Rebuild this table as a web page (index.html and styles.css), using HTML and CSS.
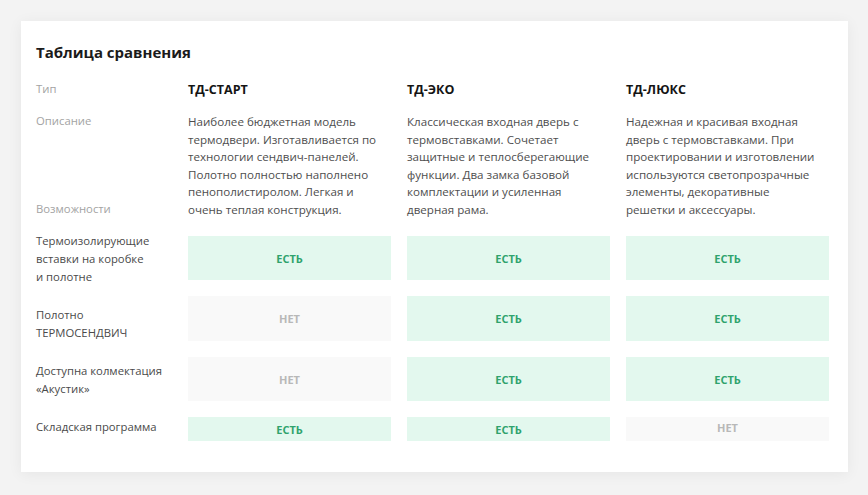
FILE: index.html
```html
<!DOCTYPE html>
<html lang="ru">
<head>
<meta charset="utf-8">
<title>Таблица сравнения</title>
<link rel="stylesheet" href="styles.css">
</head>
<body>
<section class="card">
  <h2 class="title">Таблица сравнения</h2>
  <div class="table">
    <div class="labels">
      <div class="lbl lbl-type">Тип</div>
      <div class="lbl lbl-desc">Описание</div>
      <div class="lbl lbl-cap">Возможности</div>
      <div class="features">
        <div class="feat">Термоизолирующие<br>вставки на коробке<br>и полотне</div>
        <div class="feat">Полотно<br>ТЕРМОСЕНДВИЧ</div>
        <div class="feat">Доступна колмектация<br>«Акустик»</div>
        <div class="feat">Складская программа</div>
      </div>
    </div>
    <div class="col">
      <div class="name">ТД-СТАРТ</div>
      <p class="desc">Наиболее бюджетная модель<br>термодвери. Изготавливается по<br>технологии сендвич-панелей.<br>Полотно полностью наполнено<br>пенополистиролом. Легкая и<br>очень теплая конструкция.</p>
      <div class="boxes">
        <div class="box yes h1">ЕСТЬ</div>
        <div class="box no h2">НЕТ</div>
        <div class="box no h3">НЕТ</div>
        <div class="box yes h4">ЕСТЬ</div>
      </div>
    </div>
    <div class="col">
      <div class="name">ТД-ЭКО</div>
      <p class="desc">Классическая входная дверь с<br>термовставками. Сочетает<br>защитные и теплосберегающие<br>функции. Два замка базовой<br>комплектации и усиленная<br>дверная рама.</p>
      <div class="boxes">
        <div class="box yes h1">ЕСТЬ</div>
        <div class="box yes h2">ЕСТЬ</div>
        <div class="box yes h3">ЕСТЬ</div>
        <div class="box yes h4">ЕСТЬ</div>
      </div>
    </div>
    <div class="col">
      <div class="name">ТД-ЛЮКС</div>
      <p class="desc">Надежная и красивая входная<br>дверь с термовставками. При<br>проектировании и изготовлении<br>используются светопрозрачные<br>элементы, декоративные<br>решетки и аксессуары.</p>
      <div class="boxes">
        <div class="box yes h1">ЕСТЬ</div>
        <div class="box yes h2">ЕСТЬ</div>
        <div class="box yes h3">ЕСТЬ</div>
        <div class="box no h4 up">НЕТ</div>
      </div>
    </div>
  </div>
</section>
</body>
</html>
```

FILE: styles.css
```css
* { box-sizing: border-box; }
html, body { margin: 0; padding: 0; }
body {
  background: #f3f3f3;
  font-family: "Open Sans", "Noto Sans", "Liberation Sans", sans-serif;
  width: 868px;
  height: 495px;
  overflow: hidden;
  padding: 21px 0 0 21px;
}
.card {
  width: 827px;
  background: #ffffff;
  box-shadow: 0 2px 14px rgba(0, 0, 0, 0.06);
  padding: 21px 19px 31px 15px;
}
.title {
  margin: 0 0 18px 0;
  font-size: 15px;
  line-height: 20px;
  font-weight: 700;
  color: #1b1b1b;
}
.table {
  display: grid;
  grid-template-columns: 136px repeat(3, 203px);
  column-gap: 16px;
}
.labels {
  display: flex;
  flex-direction: column;
  font-size: 11.3px;
  line-height: 18px;
}
.lbl { color: #a3a3a3; }
.lbl-type { margin-bottom: 14px; }
.lbl-desc { height: 88px; }
.lbl-cap { margin-bottom: 14px; }
.features {
  display: flex;
  flex-direction: column;
  gap: 20px;
  color: #4a4a4a;
}
.col {
  display: flex;
  flex-direction: column;
}
.name {
  padding-top: 1px;
  font-size: 12.5px;
  line-height: 18px;
  font-weight: 700;
  color: #141414;
}
.desc {
  margin: 14px 0 18px 0;
  font-size: 11.6px;
  line-height: 17.5px;
  color: #4e4e4e;
  white-space: nowrap;
}
.boxes {
  display: flex;
  flex-direction: column;
  gap: 16px;
}
.box {
  display: flex;
  align-items: center;
  justify-content: center;
  font-size: 11px;
  font-weight: 700;
}
.box.yes { background: #e3f8ee; color: #2fa36d; }
.box.no { background: #f9f9f9; color: #b8b8b8; }
.h1 { height: 44px; }
.h2 { height: 45px; }
.h3 { height: 44px; }
.h4 { height: 24px; }
.box.up { align-items: flex-start; padding-top: 3px; }
```
